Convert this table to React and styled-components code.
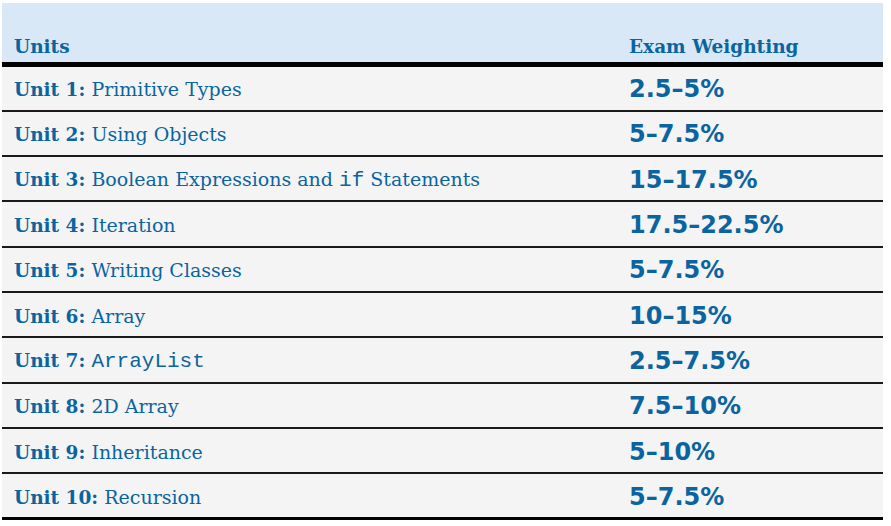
import React from "react";
import styled, { createGlobalStyle } from "styled-components";

const GlobalStyle = createGlobalStyle`
  body {
    margin: 0;
    background: #ffffff;
  }
`;

const Page = styled.div`
  padding: 3px 0 0 2px;
`;

const Table = styled.table`
  width: 881px;
  border-collapse: collapse;
  border-bottom: 3px solid #000;
`;

const HeadRow = styled.tr`
  background: #d9e8f6;
  border-bottom: 5px solid #000;
`;

const Th = styled.th`
  height: 61px;
  padding: 0 0 5px ${(p) => p.$pad || "12px"};
  box-sizing: border-box;
  vertical-align: bottom;
  text-align: left;
  font-family: "DejaVu Serif", serif;
  font-weight: bold;
  font-size: 18.5px;
  color: #0b64a0;
  width: ${(p) => p.$width || "auto"};
`;

const Row = styled.tr`
  background: #f4f4f4;
  border-bottom: ${(p) => (p.$last ? "none" : "2px solid #1a1a1a")};
`;

const UnitCell = styled.td`
  height: 41.3px;
  padding: 2px 0 0 12px;
  font-family: "DejaVu Serif", serif;
  font-size: 19px;
  color: #0b64a0;
  white-space: nowrap;
`;

const Label = styled.b`
  font-weight: bold;
  font-size: 18.5px;
`;

const Code = styled.code`
  font-family: "Liberation Mono", monospace;
  font-size: 21px;
`;

const WeightCell = styled.td`
  padding: 2px 0 0;
  font-family: "DejaVu Sans", sans-serif;
  font-weight: bold;
  font-size: 24px;
  color: #0b64a0;
`;

const units = [
  { n: 1, title: "Primitive Types", weight: "2.5–5%" },
  { n: 2, title: "Using Objects", weight: "5–7.5%" },
  {
    n: 3,
    title: (
      <>
        Boolean Expressions and <Code>if</Code> Statements
      </>
    ),
    weight: "15–17.5%",
  },
  { n: 4, title: "Iteration", weight: "17.5–22.5%" },
  { n: 5, title: "Writing Classes", weight: "5–7.5%" },
  { n: 6, title: "Array", weight: "10–15%" },
  { n: 7, title: <Code>ArrayList</Code>, weight: "2.5–7.5%" },
  { n: 8, title: "2D Array", weight: "7.5–10%" },
  { n: 9, title: "Inheritance", weight: "5–10%" },
  { n: 10, title: "Recursion", weight: "5–7.5%" },
];

export default function App() {
  return (
    <>
      <GlobalStyle />
      <Page>
        <Table>
          <thead>
            <HeadRow>
              <Th $width="627px">Units</Th>
              <Th $pad="0">Exam Weighting</Th>
            </HeadRow>
          </thead>
          <tbody>
            {units.map((u, i) => (
              <Row key={u.n} $last={i === units.length - 1}>
                <UnitCell>
                  <Label>Unit {u.n}:</Label> {u.title}
                </UnitCell>
                <WeightCell>{u.weight}</WeightCell>
              </Row>
            ))}
          </tbody>
        </Table>
      </Page>
    </>
  );
}
